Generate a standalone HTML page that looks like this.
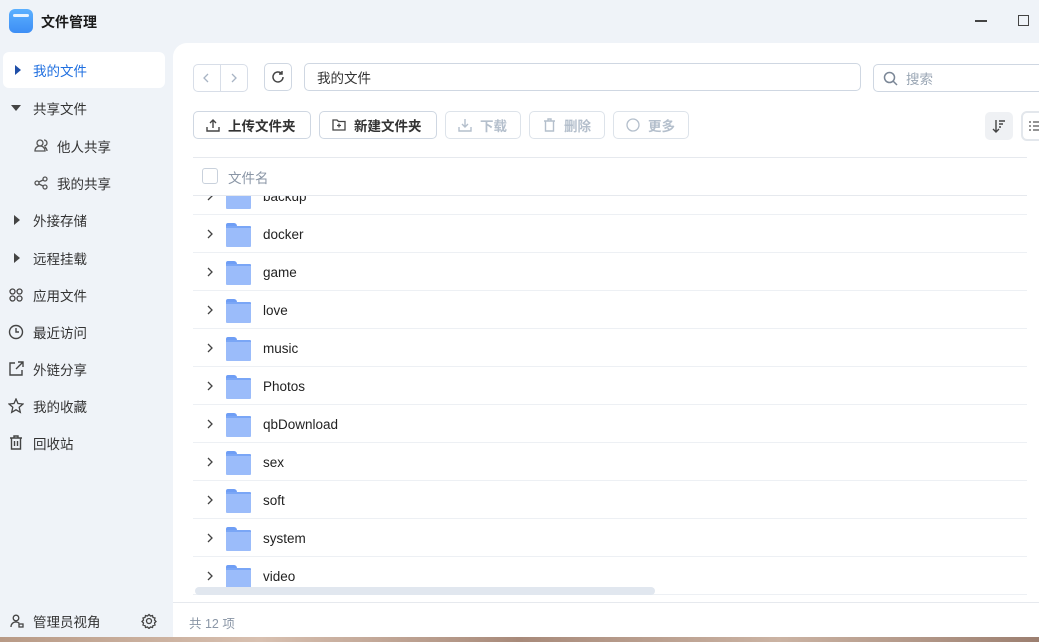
<!DOCTYPE html>
<html><head><meta charset="utf-8"><style>
*{box-sizing:border-box;margin:0;padding:0}
body{width:1039px;height:642px;overflow:hidden;background:#eff3f8;font-family:"Liberation Sans","Noto Sans CJK SC",sans-serif;position:relative;color:#222}
.abs{position:absolute}
.title{left:41px;top:12px;font-size:14px;font-weight:bold;color:#1a1a1a}
.logo{left:9px;top:9px;width:24px;height:24px;border-radius:6px;background:linear-gradient(#5bb0ff,#3d8ef5)}
.logo:after{content:"";position:absolute;left:4px;top:5px;width:16px;height:3px;background:#e8f3ff;border-radius:2px}
.side{font-size:13.5px;color:#333}
.side .it{position:absolute;left:0;width:165px;height:36px;display:flex;align-items:center}
.side .it span{position:absolute;left:33px}
.sel{left:3px!important;width:162px!important;background:#fff;border-radius:6px;color:#1f6fe0}
.main{left:173px;top:43px;width:866px;height:599px;background:#fff;border-top-left-radius:14px}
.btn{position:absolute;border:1px solid #cfd7e2;border-radius:5px;height:28px;display:flex;align-items:center;font-size:13.5px;font-weight:bold;color:#333}
.dis{color:#b4bfcc;font-weight:bold}
.row{position:absolute;left:193px;width:834px;height:38px;border-bottom:1px solid #edf0f4;font-size:13.5px;color:#222}
.row .ch{position:absolute;left:14px;top:14px}
.row .fd{position:absolute;left:33px;top:8px;width:25px;height:22px}
.row .fd:before{content:"";position:absolute;left:0;top:0;width:11px;height:5px;background:#6f9ef5;border-radius:2px 3px 0 0}
.row .fd:after{content:"";position:absolute;left:0;top:3px;width:25px;height:19px;background:#9bbcfa;border-radius:1px;border-top:2px solid #7aa6f6}
.row .nm{position:absolute;left:70px;top:12px}
</style></head><body>
<div class="abs logo"></div>
<div class="abs title">文件管理</div>
<div class="abs" style="left:975px;top:20px;width:12px;height:1.5px;background:#444"></div>
<div class="abs" style="left:1018px;top:15px;width:11px;height:11px;border:1.5px solid #444"></div>

<div class="side">
<div class="it sel" style="top:52px"><svg class="abs" style="left:12px;top:13px" width="6" height="10"><path d="M0 0L6 5L0 10Z" fill="#1f4fa8"/></svg><span style="left:30px">我的文件</span></div>
<div class="it" style="top:90px"><svg class="abs" style="left:11px;top:15px" width="10" height="6"><path d="M0 0H10L5 6Z" fill="#444"/></svg><span>共享文件</span></div>
<div class="it" style="top:128px"><svg class="abs" style="left:34px;top:11px" width="14" height="13" fill="none" stroke="#555" stroke-width="1.3"><circle cx="6" cy="4" r="3"/><path d="M1 12c0-3 2-5 5-5s5 2 5 5zM10 1a3 3 0 010 6M13 12c0-2-1-3-2-4"/></svg><span style="left:57px">他人共享</span></div>
<div class="it" style="top:165px"><svg class="abs" style="left:34px;top:11px" width="14" height="14" fill="none" stroke="#555" stroke-width="1.3"><circle cx="11" cy="3" r="2"/><circle cx="3" cy="7" r="2"/><circle cx="11" cy="11" r="2"/><path d="M5 6l4-2M5 8l4 2"/></svg><span style="left:57px">我的共享</span></div>
<div class="it" style="top:202px"><svg class="abs" style="left:14px;top:13px" width="6" height="10"><path d="M0 0L6 5L0 10Z" fill="#444"/></svg><span>外接存储</span></div>
<div class="it" style="top:240px"><svg class="abs" style="left:14px;top:13px" width="6" height="10"><path d="M0 0L6 5L0 10Z" fill="#444"/></svg><span>远程挂载</span></div>
<div class="it" style="top:277px"><svg class="abs" style="left:9px;top:11px" width="14" height="14" fill="none" stroke="#444" stroke-width="1.3"><circle cx="3.5" cy="3.5" r="2.5"/><circle cx="10.5" cy="3.5" r="2.5"/><circle cx="3.5" cy="10.5" r="2.5"/><circle cx="10.5" cy="10.5" r="2.5"/></svg><span>应用文件</span></div>
<div class="it" style="top:314px"><svg class="abs" style="left:8px;top:10px" width="16" height="16" fill="none" stroke="#444" stroke-width="1.4"><circle cx="8" cy="8" r="6.5"/><path d="M8 4v4h3"/></svg><span>最近访问</span></div>
<div class="it" style="top:351px"><svg class="abs" style="left:9px;top:10px" width="15" height="15" fill="none" stroke="#444" stroke-width="1.4"><path d="M6 2H1v12h12V9M9 1h5v5M14 1L7 8"/></svg><span>外链分享</span></div>
<div class="it" style="top:388px"><svg class="abs" style="left:8px;top:10px" width="16" height="16" fill="none" stroke="#444" stroke-width="1.3"><path d="M8 1l2 4.5 5 .5-3.8 3.3 1.1 5L8 11.8 3.7 14.3l1.1-5L1 6l5-.5z"/></svg><span>我的收藏</span></div>
<div class="it" style="top:425px"><svg class="abs" style="left:9px;top:10px" width="14" height="15" fill="none" stroke="#444" stroke-width="1.4"><path d="M1 3h12M5 3V1h4v2M2.5 3v11h9V3M5.5 6v5M8.5 6v5"/></svg><span>回收站</span></div>
<div class="it" style="top:603px"><svg class="abs" style="left:10px;top:11px" width="14" height="14" fill="none" stroke="#444" stroke-width="1.3"><circle cx="6" cy="4" r="2.8"/><path d="M1 13c0-3 2-5 5-5 1.5 0 2.5.5 3.3 1.2"/><rect x="9" y="10" width="4" height="3"/></svg><span>管理员视角</span><svg class="abs" style="left:141px;top:10px" width="16" height="16" fill="none" stroke="#444" stroke-width="1.3"><circle cx="8" cy="8" r="2.5"/><path d="M8 1.5l1.5 1.5 2-.5.5 2 2 .5-.5 2L15 8.5l-1.5 1.5.5 2-2 .5-.5 2-2-.5L8 15.5 6.5 14l-2 .5-.5-2-2-.5.5-2L1 8.5 2.5 7 2 5l2-.5.5-2 2 .5z"/></svg></div>
</div>

<div class="abs main"></div>
<!-- nav -->
<div class="btn" style="left:193px;top:64px;width:55px;height:28px;border-color:#d8dee8"><div style="position:absolute;left:26px;top:0;width:1px;height:26px;background:#d8dee8"></div>
<svg class="abs" style="left:9px;top:8px" width="6" height="10" fill="none" stroke="#a8b4c4" stroke-width="1.3"><path d="M5 1L1 5l4 4"/></svg>
<svg class="abs" style="left:37px;top:8px" width="6" height="10" fill="none" stroke="#a8b4c4" stroke-width="1.3"><path d="M1 1l4 4-4 4"/></svg></div>
<div class="btn" style="left:264px;top:63px;width:28px;height:28px;justify-content:center"><svg width="14" height="14" fill="none" stroke="#444" stroke-width="1.5"><path d="M12 7a5 5 0 11-1.5-3.6M11 1v3H8"/></svg></div>
<div class="btn" style="left:304px;top:63px;width:557px;font-weight:normal;padding-left:12px;font-size:13.5px">我的文件</div>
<div class="btn" style="left:873px;top:64px;width:180px;font-weight:normal;color:#9aa6b4;padding-left:32px">搜索<svg class="abs" style="left:9px;top:6px" width="15" height="15" fill="none" stroke="#7a8696" stroke-width="1.5"><circle cx="6.5" cy="6.5" r="5"/><path d="M10 10l4 4"/></svg></div>
<!-- toolbar -->
<div class="btn" style="left:193px;top:111px;width:118px;padding-left:34px">上传文件夹<svg class="abs" style="left:12px;top:6px" width="14" height="14" fill="none" stroke="#444" stroke-width="1.4"><path d="M7 10V2M4 5l3-3 3 3M1 9v4h12V9"/></svg></div>
<div class="btn" style="left:319px;top:111px;width:118px;padding-left:34px">新建文件夹<svg class="abs" style="left:12px;top:6px" width="14" height="13" fill="none" stroke="#444" stroke-width="1.3"><path d="M1 2h4l1.5 1.5H13V12H1zM7 5.5v4M5 7.5h4"/></svg></div>
<div class="btn dis" style="left:445px;top:111px;width:76px;padding-left:34px;border-color:#dde3ea">下载<svg class="abs" style="left:12px;top:6px" width="14" height="14" fill="none" stroke="#b4bfcc" stroke-width="1.4"><path d="M7 1v8M4 6l3 3 3-3M1 9v4h12V9"/></svg></div>
<div class="btn dis" style="left:529px;top:111px;width:76px;padding-left:34px;border-color:#dde3ea">删除<svg class="abs" style="left:13px;top:6px" width="13" height="14" fill="none" stroke="#b4bfcc" stroke-width="1.4"><path d="M1 3h11M5 3V1h3v2M2.5 3v10h8V3"/></svg></div>
<div class="btn dis" style="left:613px;top:111px;width:76px;padding-left:34px;border-color:#dde3ea">更多<svg class="abs" style="left:12px;top:6px" width="14" height="14" fill="none" stroke="#b4bfcc" stroke-width="1.3"><circle cx="7" cy="7" r="6"/></svg></div>
<div class="abs" style="left:985px;top:112px;width:28px;height:28px;background:#eff1f4;border-radius:5px"><svg class="abs" style="left:7px;top:7px" width="14" height="14" fill="none" stroke="#444" stroke-width="1.4"><path d="M4 1v12M1 10l3 3 3-3M7 2h6M7 5h4M7 8h2"/></svg></div>
<div class="abs" style="left:1021px;top:111px;width:30px;height:30px;border:2px solid #e3e7ec;border-radius:6px"><svg class="abs" style="left:6px;top:7px" width="12" height="12" stroke="#555" stroke-width="1.3"><path d="M0 2h2M4 2h8M0 6h2M4 6h8M0 10h2M4 10h8"/></svg></div>
<!-- header -->
<div class="abs" style="left:193px;top:157px;width:834px;height:1px;background:#e6e9ee"></div>
<div class="abs" style="left:202px;top:168px;width:16px;height:16px;border:1px solid #c9d1dc;border-radius:3px"></div>
<div class="abs" style="left:228px;top:167px;font-size:13.5px;color:#8a96a6">文件名</div>
<div class="abs" style="left:193px;top:195px;width:834px;height:1px;background:#e6e9ee"></div>
<!-- list -->
<div class="abs" style="left:0;top:196px;width:1039px;height:399px;overflow:hidden">
<div style="position:relative;top:-196px">
<div class="row" style="top:177px"><svg class="ch" width="6" height="10" fill="none" stroke="#444" stroke-width="1.3"><path d="M1 1l4 4-4 4"/></svg><div class="fd"></div><span class="nm">backup</span></div>
<div class="row" style="top:215px"><svg class="ch" width="6" height="10" fill="none" stroke="#444" stroke-width="1.3"><path d="M1 1l4 4-4 4"/></svg><div class="fd"></div><span class="nm">docker</span></div>
<div class="row" style="top:253px"><svg class="ch" width="6" height="10" fill="none" stroke="#444" stroke-width="1.3"><path d="M1 1l4 4-4 4"/></svg><div class="fd"></div><span class="nm">game</span></div>
<div class="row" style="top:291px"><svg class="ch" width="6" height="10" fill="none" stroke="#444" stroke-width="1.3"><path d="M1 1l4 4-4 4"/></svg><div class="fd"></div><span class="nm">love</span></div>
<div class="row" style="top:329px"><svg class="ch" width="6" height="10" fill="none" stroke="#444" stroke-width="1.3"><path d="M1 1l4 4-4 4"/></svg><div class="fd"></div><span class="nm">music</span></div>
<div class="row" style="top:367px"><svg class="ch" width="6" height="10" fill="none" stroke="#444" stroke-width="1.3"><path d="M1 1l4 4-4 4"/></svg><div class="fd"></div><span class="nm">Photos</span></div>
<div class="row" style="top:405px"><svg class="ch" width="6" height="10" fill="none" stroke="#444" stroke-width="1.3"><path d="M1 1l4 4-4 4"/></svg><div class="fd"></div><span class="nm">qbDownload</span></div>
<div class="row" style="top:443px"><svg class="ch" width="6" height="10" fill="none" stroke="#444" stroke-width="1.3"><path d="M1 1l4 4-4 4"/></svg><div class="fd"></div><span class="nm">sex</span></div>
<div class="row" style="top:481px"><svg class="ch" width="6" height="10" fill="none" stroke="#444" stroke-width="1.3"><path d="M1 1l4 4-4 4"/></svg><div class="fd"></div><span class="nm">soft</span></div>
<div class="row" style="top:519px"><svg class="ch" width="6" height="10" fill="none" stroke="#444" stroke-width="1.3"><path d="M1 1l4 4-4 4"/></svg><div class="fd"></div><span class="nm">system</span></div>
<div class="row" style="top:557px"><svg class="ch" width="6" height="10" fill="none" stroke="#444" stroke-width="1.3"><path d="M1 1l4 4-4 4"/></svg><div class="fd"></div><span class="nm">video</span></div>
</div></div>
<div class="abs" style="left:195px;top:587px;width:460px;height:8px;background:#e1e7ef;border-radius:4px"></div>
<div class="abs" style="left:173px;top:602px;width:866px;height:1px;background:#e6e9ee"></div>
<div class="abs" style="left:189px;top:613px;font-size:12.5px;color:#8a96a6">共 12 项</div>
<div class="abs" style="left:0;top:637px;width:1039px;height:5px;background:linear-gradient(90deg,#b89a86,#d8c0b0,#a88a7a,#cbb3a3,#9c7f70)"></div>
</body></html>
